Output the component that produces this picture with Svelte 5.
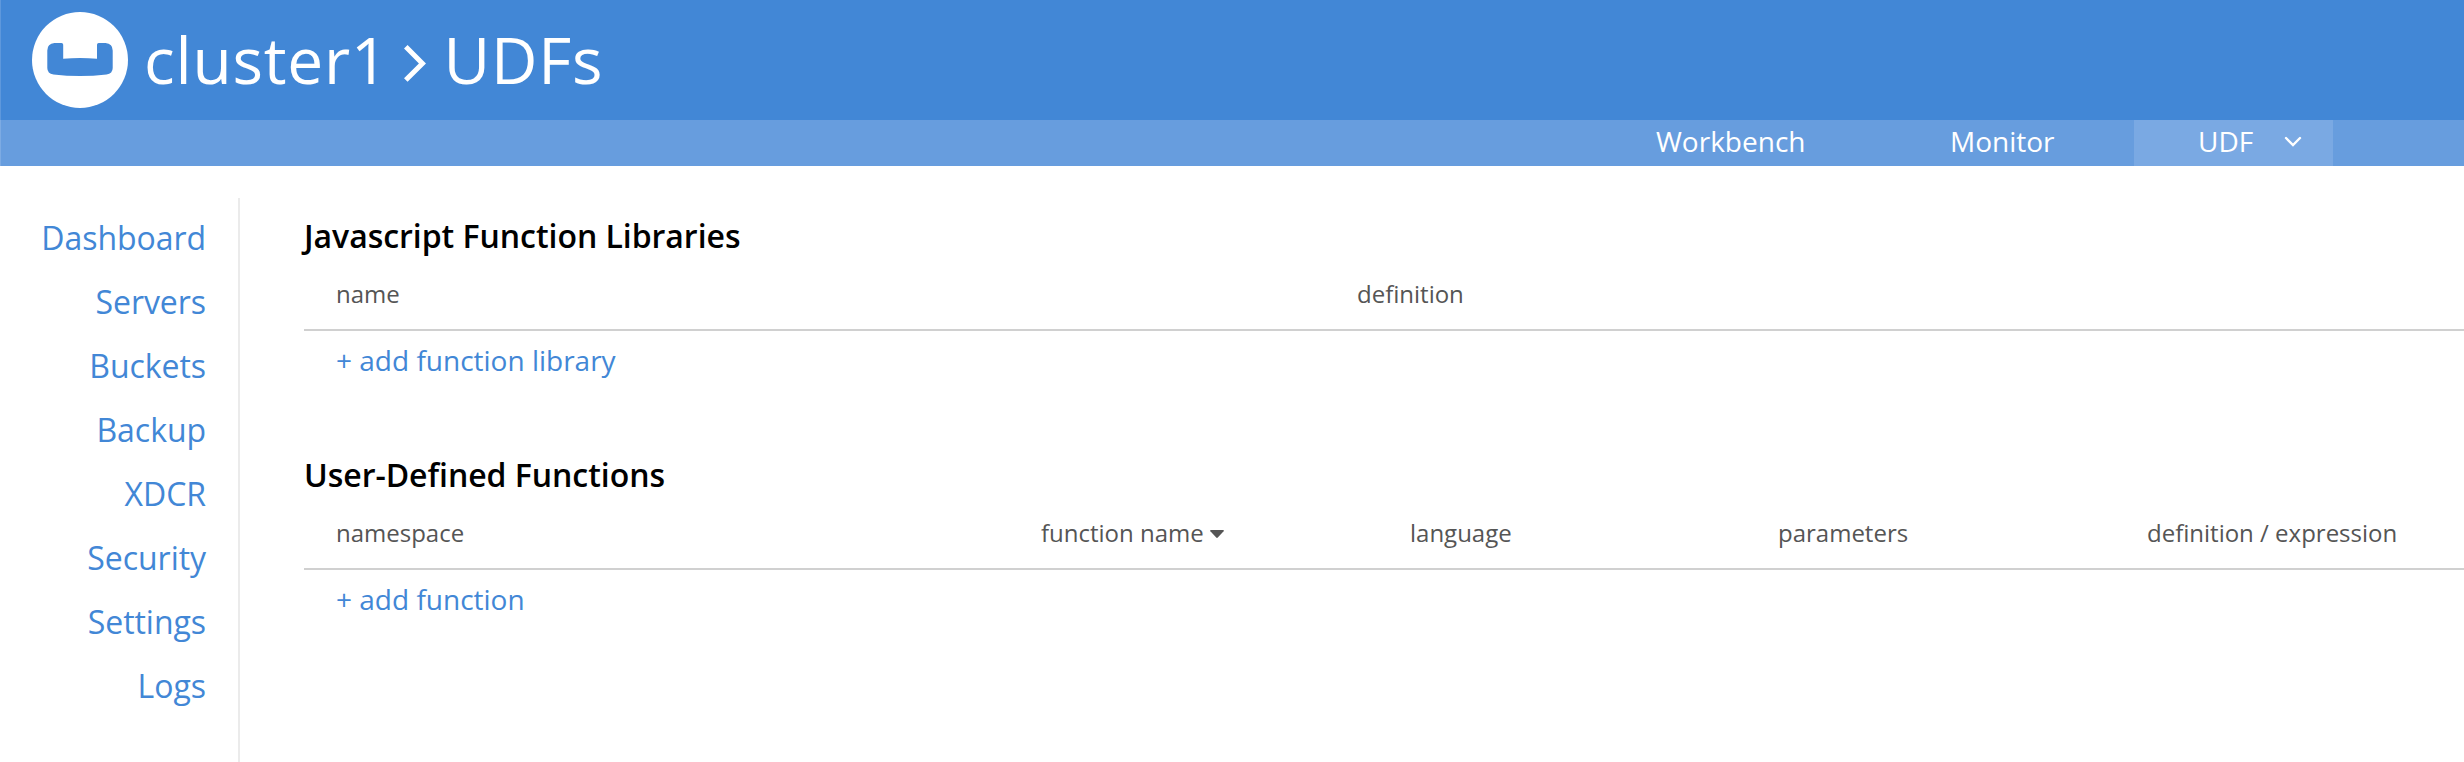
<script>
  const sections = ['Dashboard', 'Servers', 'Buckets', 'Backup', 'XDCR', 'Security', 'Settings', 'Logs'];
</script>

<div class="page">
  <header>
    <svg class="logo" viewBox="0 0 96 96" aria-hidden="true">
      <circle cx="48" cy="48" r="48" fill="#fff" />
      <path
        fill="#4287d6"
        d="M22.500 31 H29.500 Q31.200 31 31.200 32.700 V46.700 Q48 45.500 65 46.700 V32.700 Q65 31 66.700 31 H73.500 Q80.700 31.500 80.700 38.500 V56 Q80.700 61.500 74.500 62.500 Q48 65.500 21.500 62.500 Q15.300 61.500 15.300 56 V38.500 Q15.300 31.500 22.500 31 Z"
      />
    </svg>
    <h1>
      <span>cluster1</span>
      <svg class="crumb" viewBox="0 0 22 37" aria-hidden="true">
        <path d="M1.800 1.800 L18.450 18.450 L1.800 35.100" fill="none" stroke="#fff" stroke-width="5" />
      </svg>
      <span>UDFs</span>
    </h1>
  </header>

  <nav class="tabs">
    <a class="workbench">Workbench</a>
    <a class="monitor">Monitor</a>
    <a class="udf active">
      UDF
      <svg viewBox="0 0 18 12" aria-hidden="true">
        <path d="M2 2 L9 9 L16 2" fill="none" stroke="#fff" stroke-width="2.400" stroke-linecap="round" />
      </svg>
    </a>
  </nav>

  <div class="body">
    <aside>
      {#each sections as section}
        <a>{section}</a>
      {/each}
    </aside>

    <main>
      <section>
        <h2>Javascript Function Libraries</h2>
        <div class="row libraries">
          <span>name</span>
          <span>definition</span>
        </div>
        <a class="add">+ add function library</a>
      </section>
      <section>
        <h2>User-Defined Functions</h2>
        <div class="row functions">
          <span>namespace</span>
          <span>function name<svg class="caret" viewBox="0 0 14 8" aria-hidden="true"><path d="M0.800 0 H13.200 Q14.300 0.200 13.600 1.200 L7.800 7.500 Q7 8.300 6.200 7.500 L0.400 1.200 Q-0.300 0.200 0.800 0 Z" fill="#555" /></svg></span>
          <span>language</span>
          <span>parameters</span>
          <span>definition / expression</span>
        </div>
        <a class="add">+ add function</a>
      </section>
    </main>
  </div>
</div>

<style>
  :global(body) {
    margin: 0;
    background: #fff;
  }
  .page {
    width: 2464px;
    height: 762px;
    overflow: hidden;
    display: flex;
    flex-direction: column;
    box-sizing: border-box;
    font-family: 'Open Sans', sans-serif;
    color: #000;
  }
  header {
    height: 120px;
    flex: none;
    display: flex;
    align-items: center;
    padding-left: 32px;
    box-sizing: border-box;
    background: #4287d6;
    box-shadow: inset 1px 0 rgba(255, 255, 255, 0.15);
    color: #fff;
  }
  .logo {
    width: 96px;
    height: 96px;
    margin-right: 16px;
  }
  h1 {
    display: flex;
    align-items: center;
    margin: 0;
    font-size: 64px;
    line-height: 120px;
    font-weight: 400;
    letter-spacing: 0.8px;
  }
  .crumb {
    width: 22px;
    height: 37px;
    margin: 7px 17px 0 16px;
  }
  .tabs {
    height: 46px;
    flex: none;
    display: flex;
    background: #679dde;
    box-shadow: inset 1px 0 rgba(255, 255, 255, 0.15);
    color: #fff;
    font-size: 28px;
    line-height: 42px;
  }
  .workbench {
    margin-left: 1656px;
    width: 294px;
  }
  .monitor {
    width: 184px;
  }
  .udf {
    width: 199px;
    box-sizing: border-box;
    padding-left: 64px;
    display: flex;
    align-items: flex-start;
  }
  .udf svg {
    width: 18px;
    height: 12px;
    margin: 16px 0 0 30.5px;
  }
  .active {
    background: #7aa9e3;
  }
  .body {
    flex: 1;
    display: flex;
    padding-top: 32px;
  }
  aside {
    width: 240px;
    box-sizing: border-box;
    border-right: 2px solid #ebebeb;
    padding: 8px 32px 0 0;
    display: flex;
    flex-direction: column;
    text-align: right;
    font-size: 32px;
    line-height: 64px;
    letter-spacing: -0.05px;
    color: #4287d6;
  }
  main {
    flex: 1;
    padding: 14px 0 0 64px;
  }
  section {
    height: 239px;
  }
  h2 {
    margin: 0;
    font-size: 32px;
    line-height: 48px;
    font-weight: 600;
    letter-spacing: -0.04px;
  }
  .row {
    height: 71px;
    box-sizing: border-box;
    border-bottom: 2px solid #d0d0d0;
    padding-left: 32px;
    display: grid;
    font-size: 24px;
    line-height: 68px;
    color: #555;
    white-space: nowrap;
  }
  .libraries {
    grid-template-columns: 1021px 1fr;
  }
  .functions {
    grid-template-columns: 705px 369px 368px 369px 1fr;
  }
  .caret {
    width: 14px;
    height: 8px;
    margin-left: 6px;
    vertical-align: 4px;
  }
  .add {
    display: block;
    padding-left: 32px;
    font-size: 28px;
    line-height: 58px;
    color: #4287d6;
  }
</style>
